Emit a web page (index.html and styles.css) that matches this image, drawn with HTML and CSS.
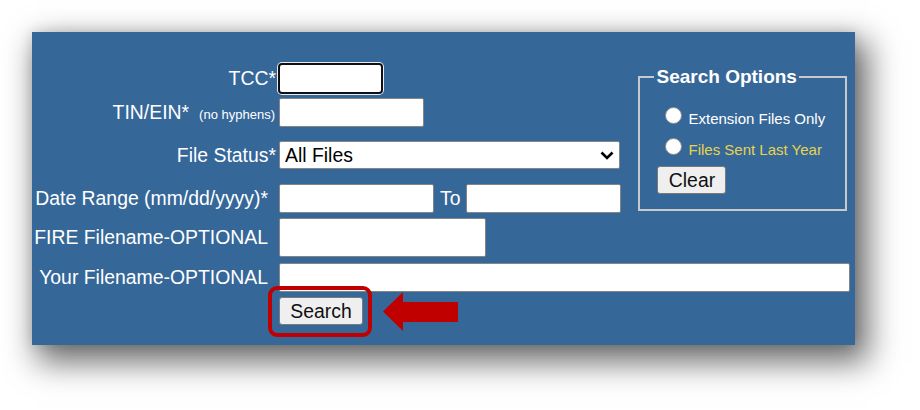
FILE: index.html
```html
<!DOCTYPE html>
<html lang="en">
<head>
<meta charset="utf-8">
<title>Search</title>
<link rel="stylesheet" href="styles.css">
</head>
<body>
<div class="panel">
  <div class="top">
    <div class="fields">
      <div class="row r1">
        <label class="lbl">TCC*</label>
        <input class="inp tcc" type="text">
      </div>
      <div class="row r2">
        <label class="lbl">TIN/EIN*<small class="hint">(no hyphens)</small></label>
        <input class="inp tin" type="text">
      </div>
      <div class="row r3">
        <label class="lbl">File Status*</label>
        <div class="selwrap">
          <select class="sel"><option>All Files</option></select>
          <svg class="chev" width="14" height="9" viewBox="0 0 14 9"><polyline points="1.5,1.5 7,7 12.5,1.5" fill="none" stroke="#000" stroke-width="2.6"/></svg>
        </div>
      </div>
      <div class="row r4">
        <label class="lbl">Date Range (mm/dd/yyyy)*</label>
        <input class="inp date" type="text">
        <span class="to">To</span>
        <input class="inp date" type="text">
      </div>
    </div>
    <fieldset class="opts">
      <legend class="legend">Search Options</legend>
      <div class="opt"><input class="radio" type="radio" name="o"><span class="optlbl">Extension Files Only</span></div>
      <div class="opt"><input class="radio" type="radio" name="o"><span class="optlbl yellow">Files Sent Last Year</span></div>
      <button class="btn clear" type="button">Clear</button>
    </fieldset>
  </div>
  <div class="row r5">
    <label class="lbl">FIRE Filename-OPTIONAL</label>
    <input class="inp fire" type="text">
  </div>
  <div class="row r6">
    <label class="lbl">Your Filename-OPTIONAL</label>
    <input class="inp yours" type="text">
  </div>
  <div class="row r7">
    <div class="searchwrap">
      <button class="btn search" type="button">Search</button>
      <span class="hl"></span>
      <svg class="arrow" width="75" height="39" viewBox="0 0 75 39"><polygon points="0,19.5 20,0 20,10 75,10 75,30 20,30 20,39" fill="#c00000"/></svg>
    </div>
  </div>
</div>
</body>
</html>
```

FILE: styles.css
```css
html, body {
  margin: 0;
  background: #ffffff;
}

body {
  min-height: 410px;
  padding: 32px 0 0 32px;
  box-sizing: border-box;
  font-family: "Liberation Sans", Arial, sans-serif;
}

.panel {
  width: 823px;
  height: 313px;
  box-sizing: border-box;
  padding-top: 31px;
  background: #366799;
  color: #ffffff;
  box-shadow: 9px 13px 30px 4px rgba(0, 0, 0, 0.58), 0 0 12px rgba(0, 0, 0, 0.12);
}

.top {
  display: flex;
  align-items: flex-start;
}

.row {
  display: flex;
  align-items: center;
}

.lbl {
  flex: none;
  width: 247px;
  box-sizing: border-box;
  padding-right: 11px;
  text-align: right;
  font-size: 19.4px;
  white-space: nowrap;
}

.hint {
  font-size: 13px;
  margin-left: 10px;
}

.r1 { height: 31px; }
.r1 .lbl { width: 246px; padding-right: 2px; }
.r2 { height: 29px; margin-top: 4px; }
.r2 .lbl { padding-right: 4px; }
.r3 { height: 28px; margin-top: 14px; }
.r3 .lbl { padding-right: 3px; }
.r4 { height: 29px; margin-top: 15px; }
.r5 { height: 39px; margin-top: 5px; }
.r6 { height: 29px; margin-top: 6px; }
.r7 { height: 28px; margin-top: 5px; }

.inp {
  box-sizing: border-box;
  height: 29px;
  margin: 0;
  padding: 0 4px;
  border: 1px solid #858585;
  border-radius: 2px;
  background: #ffffff;
  font-family: inherit;
  font-size: 17px;
}

.tcc {
  width: 105px;
  height: 31px;
  border: 2px solid #101010;
  border-radius: 4px;
  box-shadow: 0 0 0 1px #e6edf5;
}

.tin { width: 145px; }
.date { width: 155px; }
.fire { width: 207px; height: 39px; }
.yours { width: 571px; }

.to {
  margin: 0 6px;
  font-size: 19.4px;
}

.selwrap {
  position: relative;
  width: 341px;
  height: 28px;
}

.sel {
  -webkit-appearance: none;
  appearance: none;
  box-sizing: border-box;
  width: 341px;
  height: 28px;
  margin: 0;
  padding: 0 0 0 5px;
  border: 1px solid #858585;
  border-radius: 2px;
  background: #ffffff;
  color: #000000;
  font-family: inherit;
  font-size: 19.4px;
}

.chev {
  position: absolute;
  right: 6px;
  top: 10px;
  pointer-events: none;
}

.opts {
  flex: none;
  box-sizing: border-box;
  width: 209px;
  min-width: 0;
  margin: 3px 0 0 17px;
  padding: 15px 10px 15px 14px;
  border: 2px solid #c6c9ce;
}

.legend {
  padding: 0 2px;
  font-size: 19px;
  font-weight: bold;
}

.opt {
  font-size: 15px;
  line-height: 31px;
  white-space: nowrap;
}

.radio {
  -webkit-appearance: none;
  appearance: none;
  box-sizing: border-box;
  width: 17px;
  height: 17px;
  margin: 0 6px 0 11px;
  border: 1px solid #8a8a8a;
  border-radius: 50%;
  background: #ffffff;
}

.yellow {
  color: #e6d44e;
}

.btn {
  box-sizing: border-box;
  height: 28px;
  margin: 0;
  padding: 0;
  border: 1px solid #7a7a7a;
  border-radius: 3px;
  background: #efefef;
  color: #101010;
  font-family: inherit;
  font-size: 19.4px;
}

.clear {
  display: block;
  width: 69px;
  margin: 1px 0 0 3px;
}

.searchwrap {
  position: relative;
  margin-left: 247px;
  height: 28px;
}

.search {
  width: 84px;
}

.hl {
  position: absolute;
  left: -11px;
  top: -11px;
  width: 104px;
  height: 51px;
  box-sizing: border-box;
  border: 4px solid #c00000;
  border-radius: 9px;
}

.arrow {
  position: absolute;
  left: 104px;
  top: -5px;
}
```
